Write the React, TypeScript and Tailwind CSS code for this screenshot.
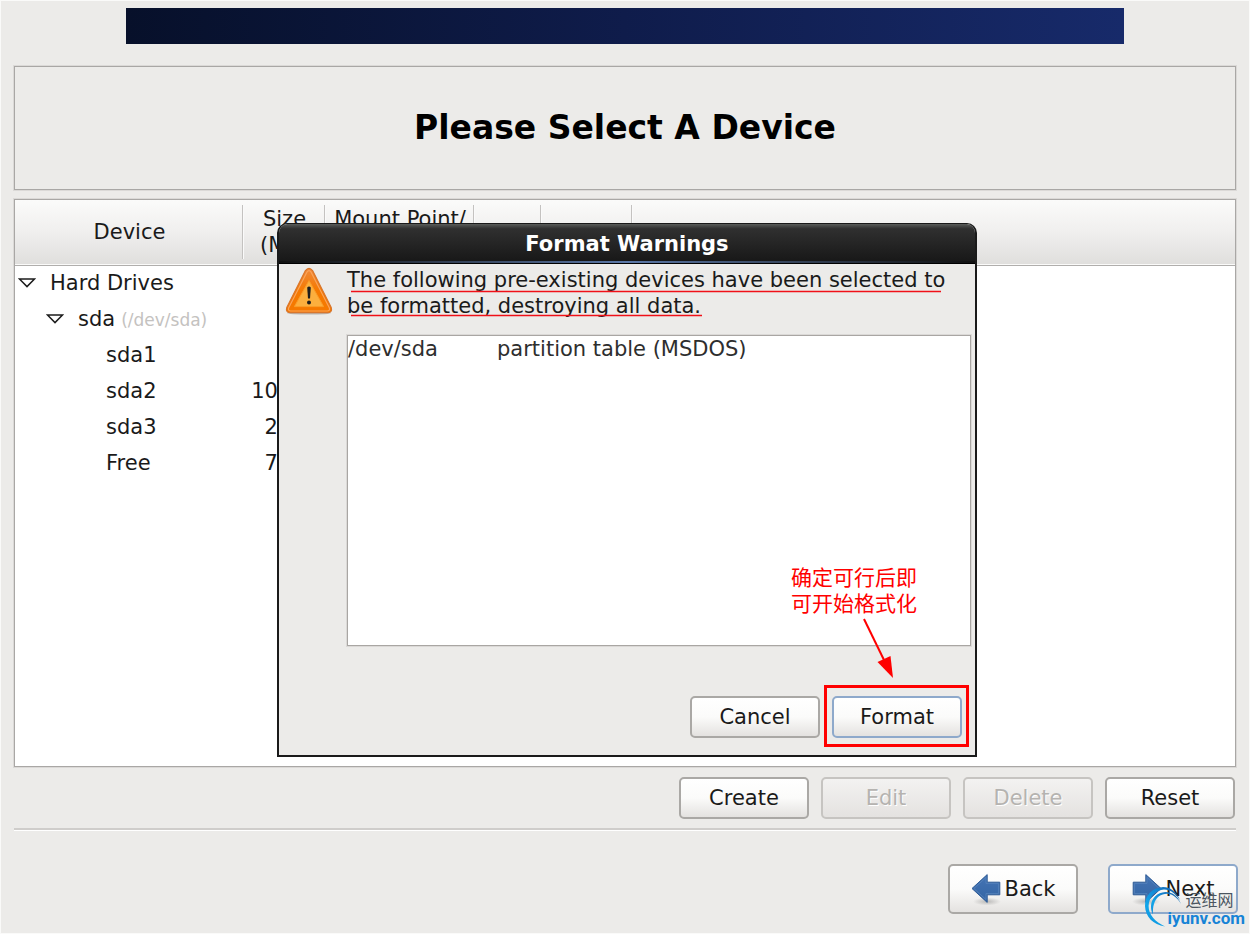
import React, { useState } from 'react';

interface DeviceRow {
  name: string;
  path?: string;
  size?: string;
  level: number;
  expandable?: boolean;
}

const devices: DeviceRow[] = [
  { name: 'Hard Drives', level: 0, expandable: true },
  { name: 'sda', path: '(/dev/sda)', level: 1, expandable: true },
  { name: 'sda1', size: '200', level: 2 },
  { name: 'sda2', size: '10240', level: 2 },
  { name: 'sda3', size: '2048', level: 2 },
  { name: 'Free', size: '7990', level: 2 },
];

const indent = ['pl-0', 'pl-7', 'pl-14'];

// Shared look of every push button
const buttonBase =
  'flex items-center justify-center w-[130px] rounded-[5px] border-2 bg-linear-to-b from-white via-[#fbfbfa] to-[#e4e2e0]';

const buttonDisabled =
  'h-[42px] w-[130px] rounded-[5px] border-2 border-[#c6c4c1] bg-linear-to-b from-[#f3f2f1] to-[#e4e2e0] text-[#b5b3b0] text-shadow-[1px_1px_0_#fff]';

const ExpandArrow: React.FC = () => (
  <svg width="18" height="10" viewBox="0 0 18 10" className="shrink-0">
    <path d="M1.5 1H16.5L9 8.6Z" fill="#fff" stroke="#1c1c1c" strokeWidth="1.5" />
  </svg>
);

const WarningIcon: React.FC = () => (
  <svg width="48" height="48" viewBox="0 0 48 48" className="shrink-0">
    <defs>
      <linearGradient id="warnOuter" x1="0" y1="0" x2="0" y2="1">
        <stop offset="0" stopColor="#f08a3c" />
        <stop offset="0.5" stopColor="#f57900" />
        <stop offset="1" stopColor="#f57900" />
      </linearGradient>
    </defs>
    <ellipse cx="24" cy="46" rx="22" ry="1.6" fill="#b9b7b4" />
    <path
      d="M20.4 3.6Q24 -1 27.6 3.6L46.2 40.4Q47.6 45.4 43 45.6H5Q0.4 45.4 1.8 40.4Z"
      fill="url(#warnOuter)"
      stroke="#d9762c"
      strokeWidth="1.2"
    />
    <path
      d="M22 5Q24 2.2 26 5L44.4 41Q45.2 43.8 42.4 44H5.6Q2.8 43.8 3.6 41Z"
      fill="none"
      stroke="#f9a45c"
      strokeWidth="1.2"
    />
    <path d="M24 13.5L38.6 39.6H9.4Z" fill="#fcaf3e" stroke="#fb9d28" strokeWidth="1" />
    <path d="M22.2 20.4Q24 18.8 25.8 20.4L25 31.4H23Z" fill="#1d1d1d" />
    <circle cx="24" cy="35.4" r="2" fill="#1d1d1d" />
  </svg>
);

const NavArrow: React.FC<{ direction: 'back' | 'next' }> = ({ direction }) => (
  <svg width="30" height="34" viewBox="0 0 30 34" className={direction === 'next' ? 'shrink-0 -scale-x-100' : 'shrink-0'}>
    <defs>
      <linearGradient id={`arrow-${direction}`} x1="0" y1="0" x2="0" y2="1">
        <stop offset="0" stopColor="#4474b4" />
        <stop offset="1" stopColor="#3465a4" />
      </linearGradient>
      <radialGradient id={`shade-${direction}`}>
        <stop offset="0" stopColor="#000" stopOpacity="0.22" />
        <stop offset="1" stopColor="#000" stopOpacity="0" />
      </radialGradient>
    </defs>
    <ellipse cx="16" cy="29.5" rx="14" ry="4" fill={`url(#shade-${direction})`} />
    <path
      d="M1 16.5L16.2 2.6V10.2H28.8V22.8H16.2V30.4Z"
      fill={`url(#arrow-${direction})`}
      stroke="#2f5c96"
      strokeWidth="1"
    />
    <path d="M2.9 16.5L15 5.4V11.4H27.6V21.6H15V27.6Z" fill="none" stroke="#5784bd" strokeWidth="0.8" />
  </svg>
);

const SwirlLogo: React.FC = () => (
  <svg width="38" height="42" viewBox="0 0 38 42" className="shrink-0">
    <defs>
      <linearGradient id="swirl" x1="1" y1="0" x2="0" y2="1">
        <stop offset="0" stopColor="#14569c" />
        <stop offset="0.4" stopColor="#1488d4" />
        <stop offset="0.7" stopColor="#12a6ea" />
        <stop offset="1" stopColor="#0d8ad8" />
      </linearGradient>
    </defs>
    <path
      d="M36 14C32 5 26 1 19 1C8 2 1 9 1 20C1.5 31 9 38.5 21 40.5C11 35.5 4.6 29 4.6 20C5 10 12 4 20 3.4C27 3.6 32 8 36 14Z"
      fill="url(#swirl)"
    />
    <path
      d="M37 18C33.500 9.500 28 6 21.5 6C13 6.500 7.500 12 7 20C7 23.5 7.600 26 9 28.500C8.800 24 9 21 10 18C12 11 17 8 23 7.8C29 8 33.5 12 37 18Z"
      fill="url(#swirl)"
    />
  </svg>
);

const FormatDialog: React.FC<{ onClose: () => void }> = ({ onClose }) => (
  <div
    role="dialog"
    aria-labelledby="dialog-title"
    className="absolute left-1/2 top-[222px] ml-0.5 flex h-[534px] w-[700px] -translate-x-1/2 flex-col overflow-hidden rounded-t-[10px] border-2 border-t border-[#1a1a1a] bg-[#ecebe9]"
  >
    <div className="flex h-10 shrink-0 flex-col bg-linear-to-b from-[#5a5c5a] via-[#303030] via-12% to-[#161616]">
      <h2 id="dialog-title" className="flex-1 pt-1 text-center text-[21px] leading-8 font-bold text-white">
        Format Warnings
      </h2>
      <div className="h-0.5 shrink-0 bg-linear-to-r from-[#111] via-[#5b78a8] to-[#111]" />
      <div className="h-px shrink-0 bg-black" />
    </div>

    <div className="flex flex-1 flex-col pl-1.5 pr-1">
      <div className="flex gap-3.5 pt-[3px]">
        <WarningIcon />
        <p className="flex-1 text-[21px] leading-[26px]">
          The following pre-existing devices have been selected to<br />
          be formatted, destroying all data.
        </p>
      </div>
      <div className="mt-4 ml-[62px] flex h-[311px] border border-[#a9a6a3] bg-white text-[21px] leading-[26px] text-[#2e2e2e] shadow-[0_0_0_1px_#dbd9d7]">
        <span className="w-[149px]">/dev/sda</span>
        <span>partition table (MSDOS)</span>
      </div>
      <div className="mt-[50px] mr-[9px] flex justify-end gap-3">
        <button type="button" onClick={onClose} className={`${buttonBase} h-[42px] border-[#aaa8a5]`}>
          Cancel
        </button>
        <div className="relative">
          <button type="button" onClick={onClose} className={`${buttonBase} h-[42px] border-[#8ea9cb]`}>
            Format
          </button>
          <span className="pointer-events-none absolute -left-2 -right-[7px] -top-[11px] -bottom-[9px] border-3 border-[#f00]" />
        </div>
      </div>
    </div>

    {/* Red marks drawn over the dialog */}
    <svg className="pointer-events-none absolute inset-0" width="696" height="531" viewBox="0 0 696 531">
      <path d="M72 67.500H662M72 91.500H423" stroke="#f01018" strokeWidth="1.4" />
      <path d="M585 395L605 436" stroke="#f00" strokeWidth="2" />
      <path d="M598.500 438L611.500 432L614 454Z" fill="#f00" />
    </svg>
    <p className="absolute left-[512px] top-[339px] font-['Noto_Sans_CJK_SC',sans-serif] text-[21px] leading-[26px] text-[#f00]">
      确定可行后即<br />可开始格式化
    </p>
  </div>
);

const App: React.FC = () => {
  const [dialogOpen, setDialogOpen] = useState(true);

  return (
    <div className="relative flex min-h-screen flex-col border border-[#fafaf9] bg-[#ecebe9] px-[13px] pt-[7px] font-['DejaVu_Sans',sans-serif] text-[21px] leading-[26px] text-[#1a1a1a]">
      <div className="mx-28 h-9 bg-linear-to-r from-[#07102a] via-[#0f1c4b] to-[#172a6a]" />

      <header className="mt-[22px] flex h-[124px] items-center justify-center border border-[#a9a7a5] shadow-[0_0_0_1px_#dbd9d7]">
        <h1 className="text-[33px] leading-10 font-bold text-black">Please Select A Device</h1>
      </header>

      <main className="mt-[9px] flex flex-1 flex-col overflow-hidden border border-[#a9a7a5] bg-white shadow-[0_0_0_1px_#dbd9d7]">
        <table className="w-full table-fixed border-collapse">
          <colgroup>
            <col className="w-[228px]" />
            <col className="w-[82px]" />
            <col className="w-[149px]" />
            <col className="w-[67px]" />
            <col className="w-[91px]" />
            <col />
          </colgroup>
          <thead>
            <tr className="h-[65px] border-b border-[#b0aeac] bg-linear-to-b from-[#fbfbfa] via-[#f0efee] to-[#e0dfdd]">
              {['Device', 'Size\n(MB)', 'Mount Point/\nRAID/Volume', '', '', ''].map((label, i) => (
                <th key={i} className="p-0 font-normal whitespace-pre">
                  <div className={i < 5 ? 'flex h-[54px] items-center justify-center border-r border-[#c4c2c0] pl-0.5 shadow-[1px_0_0_#fafafa]' : 'h-[54px]'}>
                    {label}
                  </div>
                </th>
              ))}
            </tr>
          </thead>
          <tbody>
            {devices.map((device) => (
              <tr key={device.name} className="h-9">
                <td className="p-0">
                  <div className={`flex items-center ${indent[device.level]}`}>
                    <span className="flex w-[35px] pl-[3px]">{device.expandable && <ExpandArrow />}</span>
                    <span>{device.name}</span>
                    {device.path && <span className="pl-1.5 pt-0.5 text-[17px] text-[#c4c2c0]">{device.path}</span>}
                  </div>
                </td>
                <td className="p-0 pr-[7px] text-right">{device.size}</td>
                <td colSpan={4} />
              </tr>
            ))}
          </tbody>
        </table>
      </main>

      <div className="mt-2.5 mr-px flex justify-end gap-3">
        <button type="button" className={`${buttonBase} h-[42px] border-[#aaa8a5]`}>Create</button>
        <button type="button" disabled className={buttonDisabled}>Edit</button>
        <button type="button" disabled className={buttonDisabled}>Delete</button>
        <button type="button" className={`${buttonBase} h-[42px] border-[#aaa8a5]`}>Reset</button>
      </div>

      <hr className="mt-[9px] h-[3px] border-t-2 border-b border-t-[#cfcdcb] border-b-white" />

      <footer className="relative -mr-0.5 mt-[33px] mb-[19px] flex justify-end gap-[30px]">
        <button type="button" className={`${buttonBase} h-[50px] gap-1 border-[#aaa8a5]`}>
          <NavArrow direction="back" />
          Back
        </button>
        <button type="button" onClick={() => setDialogOpen(true)} className={`${buttonBase} h-[50px] gap-1 border-[#8ea9cb]`}>
          <NavArrow direction="next" />
          Next
        </button>
        <div className="pointer-events-none absolute -right-[7px] top-[22px] flex">
          <SwirlLogo />
          <div className="-ml-[15px] flex flex-col">
            <span className="pl-[18px] pt-1 font-['Noto_Sans_CJK_SC',sans-serif] text-[16px] leading-[18px] text-[#4b5560]">运维网</span>
            <span className="font-['Roboto',sans-serif] text-[17px] leading-5 font-bold text-[#1683d6]">iyunv.com</span>
          </div>
        </div>
      </footer>

      {dialogOpen && <FormatDialog onClose={() => setDialogOpen(false)} />}
    </div>
  );
};

export default App;
